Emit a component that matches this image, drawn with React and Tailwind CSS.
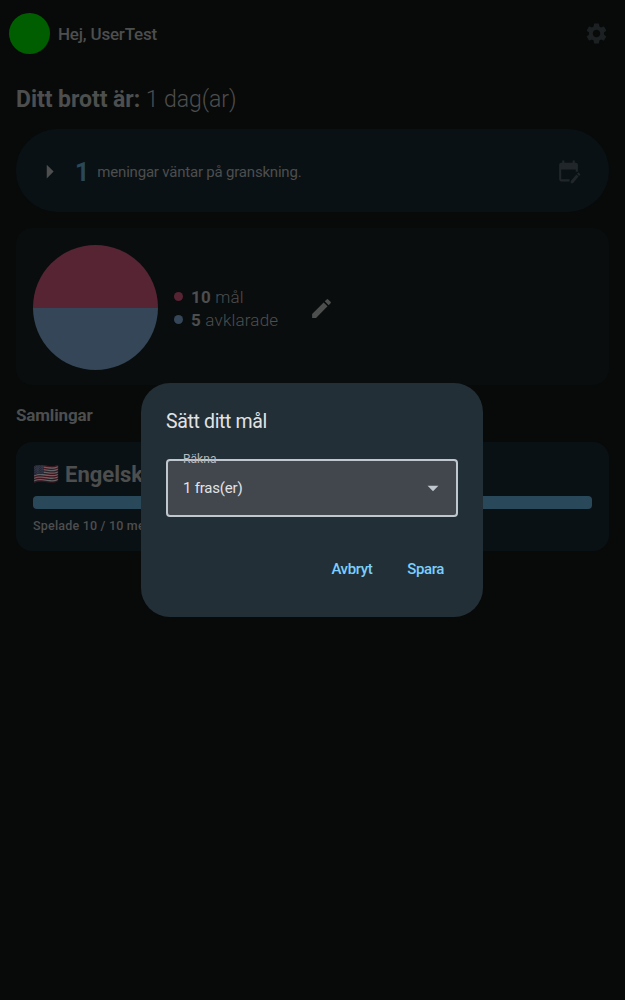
import { MdSettings, MdEdit, MdArrowRight, MdArrowDropDown } from 'react-icons/md';

function CalendarEditIcon({ className }) {
  return (
    <svg viewBox="0 0 24 24" fill="currentColor" className={className} aria-hidden="true">
      <path d="M5 21.5h8v-2H5V10h14v2.2h2V5.5c0-1.1-.9-2-2-2h-1v-2h-2v2H8v-2H6v2H5c-1.1 0-2 .9-2 2v14c0 1.1.9 2 2 2Z" />
      <path d="m23.2 15.2-1 1-2.05-2 1-1c.2-.21.54-.22.77 0l1.28 1.28c.19.2.19.52 0 .72ZM14.2 21.1l5.4-6.3 2.05 2-5.4 6.4h-2.05v-2.1Z" />
    </svg>
  );
}

function Header() {
  return (
    <header className="flex h-[67px] items-center pl-[9px] pr-4">
      <div className="size-[41px] rounded-full bg-[#005e00]" />
      <h1 className="ml-2 flex-1 text-[17px] font-medium leading-6 tracking-[-0.2px]">Hej, UserTest</h1>
      <MdSettings className="size-[25px] text-[#1d2022]" />
    </header>
  );
}

function ReviewCard() {
  return (
    <section className="flex h-[83px] items-center rounded-[42px] bg-[#0a1115] pl-[17px] pr-7 pt-[2px]">
      <MdArrowRight className="size-[33px]" />
      <span className="ml-[9px] pt-0.5 text-[25px] font-bold leading-8 text-[#29495a]">1</span>
      <span className="ml-2 flex-1 pt-px text-[15px] tracking-[-0.2px]">meningar väntar på granskning.</span>
      <CalendarEditIcon className="size-[25px] text-[#202629]" />
    </section>
  );
}

function GoalCard() {
  return (
    <section className="mt-4 flex h-[157px] items-center rounded-2xl bg-[#090d0e] pl-[17px] pt-px">
      <div className="flex size-[125px] flex-col overflow-hidden rounded-full">
        <div className="h-[63px] bg-[#562433]" />
        <div className="flex-1 bg-[#344657]" />
      </div>
      <ul className="ml-4 w-[105px] pt-[3px] text-[17px] font-light leading-[23px] tracking-[0.2px]">
        <li className="flex items-center gap-2">
          <i className="mb-0.5 size-[9px] shrink-0 rounded-full bg-[#562433]" />
          <span className="whitespace-nowrap"><b className="font-bold">10</b> mål</span>
        </li>
        <li className="flex items-center gap-2">
          <i className="mb-0.5 size-[9px] shrink-0 rounded-full bg-[#344657]" />
          <span className="whitespace-nowrap"><b className="font-bold">5</b> avklarade</span>
        </li>
      </ul>
      <MdEdit className="ml-[30px] mt-0.5 size-[25px]" />
    </section>
  );
}

function CollectionCard() {
  return (
    <section className="h-[109px] rounded-2xl bg-[#0a1115] px-[17px] pt-4">
      <h3 className="flex h-8 items-center text-[22px] font-bold">
        <span className="w-[32px] pt-px text-[21px] opacity-35">🇺🇸</span>
        <span>Engelska</span>
      </h3>
      <div className="mt-1.5 h-[13px] rounded bg-[#29495a]" />
      <p className="mt-[7px] text-[12.5px] font-medium leading-5 tracking-[0.2px]">Spelade 10 / 10 meningar</p>
    </section>
  );
}

function GoalDialog() {
  return (
    <div className="fixed inset-0 flex items-center justify-center pr-px">
      <div role="dialog" className="h-[234px] w-[342px] rounded-[29px] bg-[#232f36] px-[25px] pt-[25px] text-[#e1e2e5]">
        <h2 className="text-[19.5px] leading-[27px] tracking-[-0.35px]">Sätt ditt mål</h2>
        <div className="relative mt-6 flex h-[58px] items-center rounded border-2 border-[#c1c7ce] bg-[#42474e] pl-[15px] pr-2.5">
          <span className="absolute -top-[10px] left-[15px] text-[12px] leading-4 tracking-[0.1px] text-[#b5bac0]">Räkna</span>
          <span className="flex-1 pt-px text-[15px] tracking-[-0.2px]">1 fras(er)</span>
          <MdArrowDropDown className="size-[26px] text-[#c1c7ce]" />
        </div>
        <div className="mt-8 flex justify-end gap-[35px] pr-[14px] text-[15px] font-medium leading-[41px] tracking-[-0.4px] text-[#7acfff]">
          <button>Avbryt</button>
          <button>Spara</button>
        </div>
      </div>
    </div>
  );
}

export default function App() {
  return (
    <div className="h-screen overflow-hidden bg-[#080a0a] font-['Roboto',sans-serif] text-[#4d4e4e]">
      <Header />
      <main className="px-4">
        <h2 className="mt-4 h-[46px] text-[23px] font-light leading-[33px] tracking-[-0.05px]">
          <b className="font-bold">Ditt brott är:</b> 1 dag(ar)
        </h2>
        <ReviewCard />
        <GoalCard />
        <h2 className="mt-[18px] h-[39px] text-[17px] font-bold leading-[25px] tracking-[-0.15px]">Samlingar</h2>
        <CollectionCard />
      </main>
      <GoalDialog />
    </div>
  );
}
